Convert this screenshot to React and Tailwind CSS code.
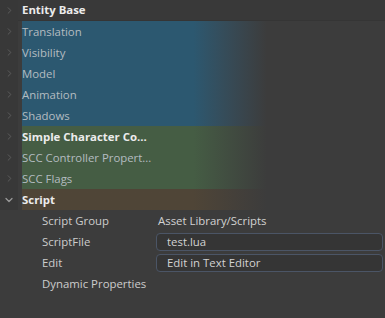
import { ChevronRight, ChevronDown } from "lucide-react";

const font = { fontFamily: '"Open Sans", "Noto Sans", sans-serif' };

const groups = [
  { name: "Entity Base", bold: true, tint: "" },
  { name: "Translation", tint: "blue" },
  { name: "Visibility", tint: "blue" },
  { name: "Model", tint: "blue" },
  { name: "Animation", tint: "blue" },
  { name: "Shadows", tint: "blue" },
  { name: "Simple Character Co...", bold: true, tint: "green" },
  { name: "SCC Controller Propert...", tint: "green" },
  { name: "SCC Flags", tint: "green" },
  { name: "Script", bold: true, tint: "brown", open: true },
];

const tints = {
  blue: "bg-gradient-to-r from-[#2c5870] via-[#2c5870] via-70% to-[#3c3c3c]",
  green: "bg-gradient-to-r from-[#455d44] via-[#455d44] via-70% to-[#3c3c3c]",
  brown: "bg-gradient-to-r from-[#4f4537] via-[#4f4537] via-70% to-[#3c3c3c]",
};

const Header = ({ g }) => (
  <div className="flex h-[21px] items-center">
    <div className="flex h-full w-[18px] items-center justify-center bg-[#383838] text-[#5e5e5e]">
      {g.open ? (
        <ChevronDown size={12} strokeWidth={2.5} className="text-[#9a9a9a]" />
      ) : (
        <ChevronRight size={11} strokeWidth={2} />
      )}
    </div>
    <div
      className={`flex h-full flex-1 items-center pl-[4px] ${
        g.tint ? "" : "bg-[#393939] border-b border-[#353535]"
      }`}
    >
      <div
        className={`flex h-full w-[245px] items-center ${g.tint ? tints[g.tint] : ""}`}
      >
        <span
          className={`text-[11.4px] ${
            g.bold ? "font-bold text-[#ececec]" : "text-[#b4bcc0]"
          }`}
        >
          {g.name}
        </span>
      </div>
    </div>
  </div>
);

const Prop = ({ label, value, box }) => (
  <div className="flex h-[21px] items-center">
    <span className="w-[116px] pl-[42px] text-[11.4px] text-[#cccccc] whitespace-nowrap">
      {label}
    </span>
    {value && (
      <div
        className={`ml-[40px] mr-[2px] flex h-[18px] flex-1 items-center text-[11.4px] text-[#d2d2d2] ${
          box
            ? "rounded-[4px] border border-[#4b5566] bg-[#353535] pl-[10px]"
            : "pl-[2px]"
        }`}
      >
        {value}
      </div>
    )}
  </div>
);

export default function App() {
  return (
    <div className="h-[318px] w-[385px] overflow-hidden bg-[#3c3c3c]" style={font}>
      {groups.map((g) => (
        <Header key={g.name} g={g} />
      ))}
      <Prop label="Script Group" value="Asset Library/Scripts" />
      <Prop label="ScriptFile" value="test.lua" box />
      <Prop label="Edit" value="Edit in Text Editor" box />
      <Prop label="Dynamic Properties" />
    </div>
  );
}
